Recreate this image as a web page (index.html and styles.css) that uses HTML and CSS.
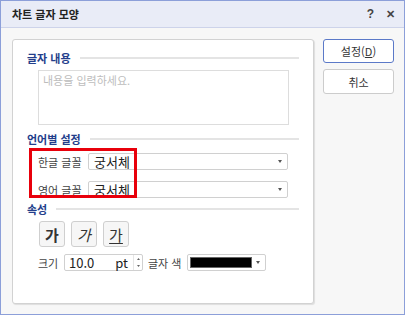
FILE: index.html
```html
<!DOCTYPE html>
<html lang="ko">
<head>
  <meta charset="UTF-8">
  <title>차트 글자 모양</title>
  <link rel="stylesheet" href="styles.css">
</head>
<body>
  <div class="window">
    <div class="titlebar">
      <span class="title">차트 글자 모양</span>
      <div class="title-tools">
        <span class="help">?</span>
        <span class="close">&#x2715;</span>
      </div>
    </div>

    <div class="dialog-body">
      <div class="panel">
        <div class="section-head"><span>글자 내용</span></div>
        <div class="textbox">내용을 입력하세요.</div>

        <div class="section-head sh-lang"><span>언어별 설정</span></div>
        <div class="font-row">
          <span class="label">한글 글꼴</span>
          <div class="select"><span>궁서체</span><i class="caret"></i></div>
        </div>
        <div class="font-row">
          <span class="label">영어 글꼴</span>
          <div class="select"><span>궁서체</span><i class="caret"></i></div>
        </div>

        <div class="section-head sh-attr"><span>속성</span></div>
        <div class="style-buttons">
          <button class="style-btn bold">가</button>
          <button class="style-btn italic">가</button>
          <button class="style-btn underline">가</button>
        </div>
        <div class="size-row">
          <span class="label size-label">크기</span>
          <div class="spin">
            <span class="spin-value">10.0</span>
            <span class="spin-unit">pt</span>
            <span class="spin-arrows">
              <svg width="3" height="2" viewBox="0 0 3 2"><path d="M0 2L1.5 0L3 2Z" fill="#666"/></svg>
              <svg width="3" height="2" viewBox="0 0 3 2"><path d="M0 0L1.5 2L3 0Z" fill="#666"/></svg>
            </span>
          </div>
          <span class="label color-label">글자 색</span>
          <div class="color-pick">
            <span class="swatch"></span>
            <i class="caret"></i>
          </div>
        </div>

        <div class="highlight"></div>
      </div>

      <div class="side-buttons">
        <button class="btn primary">설정(<u>D</u>)</button>
        <button class="btn">취소</button>
      </div>
    </div>
  </div>
</body>
</html>
```

FILE: styles.css
```css
html, body {
  margin: 0;
  padding: 0;
  background: #ffffff;
}

body {
  font-family: 'Noto Sans CJK KR', 'Noto Sans', sans-serif;
  font-size: 11px;
  color: #333333;
}

.window {
  width: 405px;
  height: 315px;
  box-sizing: border-box;
  border: 1px solid #8c9fd9;
  background: #f7f7f7;
  display: flex;
  flex-direction: column;
}

.titlebar {
  height: 26px;
  flex: none;
  background: #e9ecf7;
  border-bottom: 1px solid #cdd3ea;
  display: flex;
  align-items: center;
  justify-content: space-between;
  padding: 0 9px 0 11px;
}

.title {
  font-weight: 700;
  font-size: 11px;
  color: #222222;
}

.title-tools {
  display: flex;
  gap: 12px;
  align-items: center;
  color: #444444;
  font-family: 'Liberation Sans', sans-serif;
  font-weight: 700;
}

.help {
  font-size: 12px;
}

.close {
  font-size: 11px;
}

.dialog-body {
  flex: 1;
  display: flex;
  align-items: flex-start;
  padding: 11px 9px 0 11px;
  gap: 9px;
}

.panel {
  position: relative;
  width: 302px;
  height: 265px;
  box-sizing: border-box;
  background: #ffffff;
  border: 1px solid #d2d2d2;
  border-radius: 3px;
  box-shadow: 1px 1px 1px rgba(0, 0, 0, 0.1);
  padding: 10px 14px 0 14px;
}

.section-head {
  display: flex;
  align-items: center;
  gap: 9px;
  height: 16px;
  color: #233e8b;
  font-weight: 700;
}

.section-head::after {
  content: "";
  flex: 1;
  height: 2px;
  background: #e4e4e4;
}

.textbox {
  margin: 4px 0 0 11px;
  width: 251px;
  height: 55px;
  box-sizing: border-box;
  border: 1px solid #dddddd;
  padding: 2px 4px;
  color: #bdbdbd;
  font-size: 11px;
  line-height: 14px;
}

.sh-lang {
  margin-top: 6px;
}

.font-row {
  display: flex;
  align-items: center;
  margin: 6px 0 0 11px;
  height: 17px;
}

.font-row + .font-row {
  margin-top: 11px;
}

.label {
  color: #444444;
  white-space: nowrap;
  flex: none;
}

.font-row .label {
  width: 50px;
}

.select {
  flex: none;
  width: 200px;
  height: 17px;
  box-sizing: border-box;
  border: 1px solid #d0d0d0;
  border-radius: 2px;
  display: flex;
  align-items: center;
  justify-content: space-between;
  padding: 0 5px 0 5px;
  font-size: 13px;
  color: #222222;
}

.caret {
  width: 0;
  height: 0;
  border-left: 2px solid transparent;
  border-right: 2px solid transparent;
  border-top: 3px solid #555555;
}

.sh-attr {
  margin-top: 3px;
}

.style-buttons {
  display: flex;
  gap: 6px;
  margin: 4px 0 0 12px;
}

.style-btn {
  width: 26px;
  height: 26px;
  box-sizing: border-box;
  border: 1px solid #cfcfcf;
  border-radius: 3px;
  background: #f6f6f6;
  font-family: 'Noto Sans CJK KR', sans-serif;
  font-size: 15px;
  line-height: 1;
  color: #333333;
  padding: 0;
}

.style-btn.bold {
  font-weight: 700;
}

.style-btn.italic {
  font-style: italic;
}

.style-btn.underline {
  text-decoration: underline;
  text-underline-offset: 2px;
}

.size-row {
  display: flex;
  align-items: center;
  margin: 7px 0 0 11px;
  height: 17px;
}

.size-label {
  width: 26px;
}

.spin {
  flex: none;
  width: 79px;
  height: 17px;
  box-sizing: border-box;
  border: 1px solid #d0d0d0;
  border-radius: 2px;
  display: flex;
  align-items: center;
  padding-left: 4px;
  font-size: 13px;
  color: #222222;
}

.spin-value {
  flex: 1;
}

.spin-unit {
  margin-right: 5px;
}

.spin-arrows {
  width: 8px;
  height: 15px;
  border-left: 1px solid #e6e6e6;
  display: flex;
  flex-direction: column;
  align-items: center;
  justify-content: center;
  gap: 5px;
}

.spin-arrows svg {
  display: block;
}

.color-label {
  margin: 0 6px 0 5px;
}

.color-pick {
  flex: none;
  width: 79px;
  height: 17px;
  box-sizing: border-box;
  border: 1px solid #d0d0d0;
  border-radius: 2px;
  display: flex;
  align-items: center;
  justify-content: space-between;
  padding: 0 5px 0 2px;
}

.swatch {
  width: 62px;
  height: 11px;
  background: #000000;
  border: 1px solid #666666;
  box-sizing: border-box;
}

/* red annotation box over the font rows */
.highlight {
  position: absolute;
  left: 16px;
  top: 108px;
  width: 108px;
  height: 50px;
  box-sizing: border-box;
  border: 3px solid #e8000b;
}

.side-buttons {
  display: flex;
  flex-direction: column;
  gap: 6px;
}

.btn {
  width: 71px;
  height: 24px;
  box-sizing: border-box;
  background: #ffffff;
  border: 1px solid #cccccc;
  border-radius: 3px;
  font-family: 'Noto Sans CJK KR', sans-serif;
  font-size: 11px;
  color: #333333;
  padding: 0;
}

.btn.primary {
  border-color: #5b79c8;
}

.btn + .btn {
  height: 25px;
}
```
